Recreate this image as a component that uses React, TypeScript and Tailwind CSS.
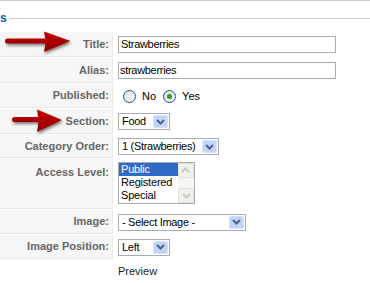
import React from "react";

const Chevron = ({ faded = false }: { faded?: boolean }) => (
  <svg width="9" height="6" viewBox="0 0 9 6">
    <path
      d="M1 1 L4.5 4.5 L8 1"
      fill="none"
      stroke={faded ? "#c9c9c0" : "#4d6185"}
      strokeWidth="2"
    />
  </svg>
);

const Select = ({ value, width }: { value: string; width: string }) => (
  <div
    className={`${width} h-[17px] border border-[#a5acb2] bg-white flex items-center justify-between pl-[3px] pr-px`}
  >
    <span className="text-[11px] text-black leading-none tracking-[-0.3px]">{value}</span>
    <div className="w-[15px] h-[13px] rounded-[2px] bg-[#c3d4fb] border border-[#d6e1fc] flex items-center justify-center">
      <Chevron />
    </div>
  </div>
);

const Radio = ({ checked }: { checked?: boolean }) => (
  <div className="w-[13px] h-[13px] rounded-full border border-[#1c5180] bg-gradient-to-br from-[#dcdcd5] to-white flex items-center justify-center">
    {checked && <div className="w-[5px] h-[5px] rounded-full bg-[#21a121]" />}
  </div>
);

const Row = ({
  label,
  h,
  top,
  children,
}: {
  label?: string;
  h: string;
  top?: boolean;
  children: React.ReactNode;
}) => (
  <div className={`flex ${h}`}>
    {label ? (
      <div
        className={`w-[113px] shrink-0 bg-[#f6f6f6] border-r border-b border-[#e9e9e9] flex justify-end pr-[3px] text-[11px] font-bold text-[#666] ${
          top ? "items-start pt-[5px]" : "items-center"
        }`}
      >
        {label}
      </div>
    ) : (
      <div className="w-[113px] shrink-0" />
    )}
    <div className={`ml-px pl-[4px] flex ${top ? "items-start pt-[3px]" : "items-center"}`}>
      {children}
    </div>
  </div>
);

export default function App() {
  return (
    <div className="relative w-[370px] h-[283px] overflow-hidden bg-white font-['Liberation_Sans',Arial,sans-serif]">
      <div className="h-px bg-[#cccccc]" />
      <div className="mt-[10px] h-[14px] flex items-center">
        <span className="text-[12px] font-bold text-[#0b55c4] leading-none">s</span>
        <div className="ml-[3px] flex-1 h-px bg-[#cccccc] mt-px" />
      </div>

      <div className="mt-[7px] flex flex-col gap-px">
        <Row label="Title:" h="h-[25px]">
          <div className="w-[218px] h-[17px] border border-[#a5acb2] flex items-center px-[2px] text-[11px] tracking-[-0.3px]">
            Strawberries
          </div>
        </Row>
        <Row label="Alias:" h="h-[25px]">
          <div className="w-[218px] h-[17px] border border-[#a5acb2] flex items-center px-[1px] text-[11px] tracking-[-0.3px]">
            strawberries
          </div>
        </Row>
        <Row label="Published:" h="h-[24px]">
          <div className="flex items-center pl-[5px] text-[11px]">
            <Radio />
            <span className="ml-[6px]">No</span>
            <div className="ml-[7px]">
              <Radio checked />
            </div>
            <span className="ml-[6px]">Yes</span>
          </div>
        </Row>
        <Row label="Section:" h="h-[25px]">
          <Select value="Food" width="w-[52px]" />
        </Row>
        <Row label="Category Order:" h="h-[23px]">
          <Select value="1 (Strawberries)" width="w-[101px]" />
        </Row>
        <Row label="Access Level:" h="h-[50px]" top>
          <div className="w-[77px] h-[42px] border border-[#a5acb2] flex bg-white">
            <div className="flex-1 flex flex-col text-[11px] leading-[13px] tracking-[-0.2px]">
              <div className="bg-[#316ac5] text-white pl-[2px]">Public</div>
              <div className="pl-[2px]">Registered</div>
              <div className="pl-[2px]">Special</div>
            </div>
            <div className="w-[16px] bg-[#f6f6f2] flex flex-col justify-between">
              <div className="h-[15px] border border-[#e2e2da] rounded-[2px] bg-[#f0f0ea] flex items-center justify-center rotate-180">
                <Chevron faded />
              </div>
              <div className="h-[15px] border border-[#e2e2da] rounded-[2px] bg-[#f0f0ea] flex items-center justify-center">
                <Chevron faded />
              </div>
            </div>
          </div>
        </Row>
        <Row label="Image:" h="h-[24px]">
          <Select value="- Select Image -" width="w-[128px]" />
        </Row>
        <Row label="Image Position:" h="h-[24px]">
          <Select value="Left" width="w-[52px]" />
        </Row>
        <Row h="h-[23px]">
          <span className="text-[11px] text-[#222]">Preview</span>
        </Row>
      </div>

      <svg className="absolute left-0 top-0 pointer-events-none" width="370" height="283">
        <defs>
          <filter id="sh" x="-20%" y="-30%" width="150%" height="180%">
            <feGaussianBlur in="SourceAlpha" stdDeviation="1.5" />
            <feOffset dx="1" dy="2" />
            <feComponentTransfer>
              <feFuncA type="linear" slope="0.5" />
            </feComponentTransfer>
            <feMerge>
              <feMergeNode />
              <feMergeNode in="SourceGraphic" />
            </feMerge>
          </filter>
          <linearGradient id="rg" x1="0" y1="0" x2="0" y2="1">
            <stop offset="0" stopColor="#c40000" />
            <stop offset="1" stopColor="#8e0000" />
          </linearGradient>
        </defs>
        <g filter="url(#sh)" fill="url(#rg)">
          <rect x="5" y="38.5" width="42" height="5" rx="2.5" />
          <path d="M44 31.5 L70.5 41 L44 52 Q46.5 41.5 44 31.5 Z" />
        </g>
        <g filter="url(#sh)" fill="url(#rg)">
          <rect x="12" y="117" width="28" height="5" rx="2.5" />
          <path d="M37 109.5 L62 120 L37 132 Q39.5 120.5 37 109.5 Z" />
        </g>
      </svg>
    </div>
  );
}
